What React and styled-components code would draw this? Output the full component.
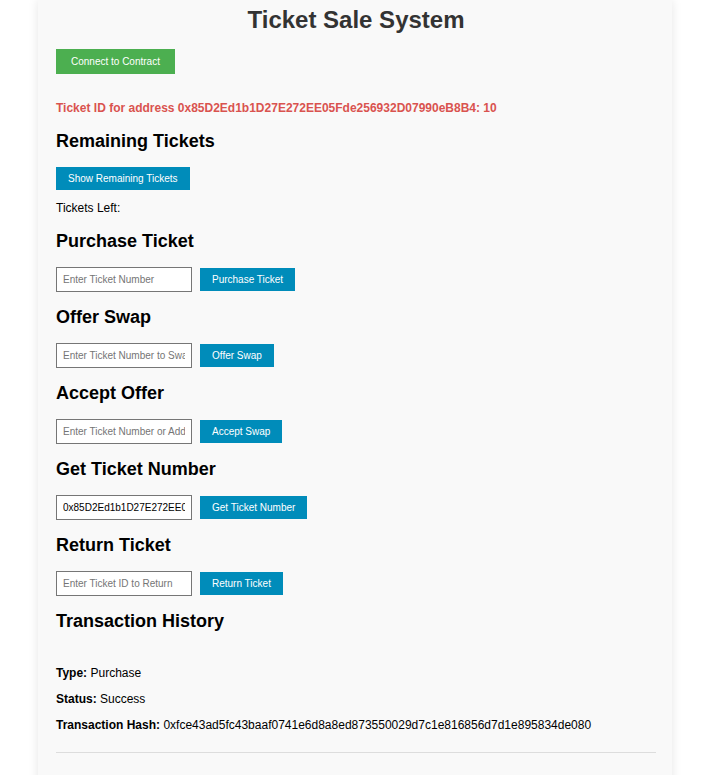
import React from 'react';
import styled, { createGlobalStyle, css } from 'styled-components';

const GlobalStyle = createGlobalStyle`
    html {
        overflow: hidden;
    }
    body {
        margin: 0;
        background: #fff;
        font-family: "Liberation Sans", Arial, sans-serif;
        color: #000;
    }
`;

const sections = [
    { title: 'Purchase Ticket', placeholder: 'Enter Ticket Number', action: 'Purchase Ticket' },
    { title: 'Offer Swap', placeholder: 'Enter Ticket Number to Swap', action: 'Offer Swap' },
    { title: 'Accept Offer', placeholder: 'Enter Ticket Number or Address', action: 'Accept Swap' },
    { title: 'Get Ticket Number', value: '0x85D2Ed1b1D27E272EE05Fde256932D07990eB8B4', action: 'Get Ticket Number' },
    { title: 'Return Ticket', placeholder: 'Enter Ticket ID to Return', action: 'Return Ticket' },
];

const history = [
    { label: 'Type:', value: 'Purchase' },
    { label: 'Status:', value: 'Success' },
    { label: 'Transaction Hash:', value: '0xfce43ad5fc43baaf0741e6d8a8ed873550029d7c1e816856d7d1e895834de080' },
];

function App() {
    return (
        <>
            <GlobalStyle />
            <Page>
                <Container>
                    <Title>Ticket Sale System</Title>
                    <Button $variant="green">Connect to Contract</Button>
                    <Notice>Ticket ID for address 0x85D2Ed1b1D27E272EE05Fde256932D07990eB8B4: 10</Notice>

                    <Heading $top={16}>Remaining Tickets</Heading>
                    <Button>Show Remaining Tickets</Button>
                    <Info>Tickets Left:</Info>

                    {sections.map((s, i) => (
                        <Section key={s.title} $top={i === 0 ? 16 : 15}>
                            <Heading>{s.title}</Heading>
                            <Row>
                                <Input
                                    type="text"
                                    placeholder={s.placeholder}
                                    defaultValue={s.value}
                                />
                                <Button>{s.action}</Button>
                            </Row>
                        </Section>
                    ))}

                    <Heading $top={15}>Transaction History</Heading>
                    <HistoryList>
                        {history.map((h) => (
                            <HistoryItem key={h.label}>
                                <strong>{h.label}</strong> {h.value}
                            </HistoryItem>
                        ))}
                    </HistoryList>
                    <Divider />
                </Container>
            </Page>
        </>
    );
}

export default App;

const Page = styled.div`
    padding-right: 13px;
`;

const Container = styled.div`
    width: 600px;
    margin: 0 auto;
    padding: 6px 16px 40px 18px;
    background-color: #f9f9f9;
    box-shadow: 0 0 10px rgba(0, 0, 0, 0.1);
    display: flex;
    flex-direction: column;
    align-items: flex-start;
`;

const Title = styled.h1`
    align-self: stretch;
    margin: 0;
    font-size: 24px;
    line-height: 27.6px;
    font-weight: bold;
    color: #333;
    text-align: center;
`;

const Button = styled.button`
    border: none;
    cursor: pointer;
    font-family: "Liberation Sans", Arial, sans-serif;
    font-size: 10px;
    line-height: 11px;
    color: #fff;
    background-color: #008cba;
    padding: 6px 12px;
    margin-top: 15px;

    ${(p) =>
        p.$variant === 'green' &&
        css`
            background-color: #4caf50;
            padding: 7px 15px;
        `}
`;

const Notice = styled.p`
    margin: 27px 0 0;
    font-size: 12px;
    line-height: 14px;
    font-weight: bold;
    color: #d9534f;
`;

const Heading = styled.h2`
    margin: ${(p) => p.$top || 0}px 0 0;
    font-size: 18px;
    line-height: 21px;
    font-weight: bold;
    color: #000;
`;

const Info = styled.p`
    margin: 11px 0 0;
    font-size: 12px;
    line-height: 14px;
`;

const Section = styled.div`
    margin-top: ${(p) => p.$top}px;
    display: flex;
    flex-direction: column;
    gap: 15px;
`;

const Row = styled.div`
    display: flex;
    align-items: center;
    gap: 8px;

    ${Button} {
        margin-top: 0;
    }
`;

const Input = styled.input`
    box-sizing: border-box;
    width: 136px;
    height: 25px;
    padding: 0 6px;
    border: 1px solid #767676;
    background: #fff;
    font-family: "Liberation Sans", Arial, sans-serif;
    font-size: 10px;
    color: #000;
    outline: none;

    &::placeholder {
        color: #757575;
    }
`;

const HistoryList = styled.div`
    margin-top: 34px;
    display: flex;
    flex-direction: column;
    gap: 12px;
`;

const HistoryItem = styled.p`
    margin: 0;
    font-size: 12px;
    line-height: 14px;
    color: #000;
`;

const Divider = styled.hr`
    align-self: stretch;
    margin: 20px 0 0;
    border: none;
    border-top: 1px solid #ddd;
`;
